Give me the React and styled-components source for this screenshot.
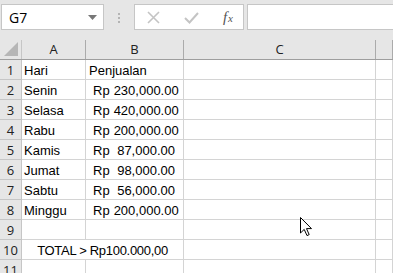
import React from 'react';
import styled, { createGlobalStyle } from 'styled-components';

const GlobalStyle = createGlobalStyle`
  html, body {
    margin: 0;
    padding: 0;
    background: #ffffff;
  }
`;

const rows = [
  ['Hari', { head: 'Penjualan' }],
  ['Senin', { num: '230,000.00' }],
  ['Selasa', { num: '420,000.00' }],
  ['Rabu', { num: '200,000.00' }],
  ['Kamis', { num: '87,000.00' }],
  ['Jumat', { num: '98,000.00' }],
  ['Sabtu', { num: '56,000.00' }],
  ['Minggu', { num: '200,000.00' }],
  ['', null],
];

const cols = [
  { key: 'A', width: 64 },
  { key: 'B', width: 98 },
  { key: 'C', width: 192 },
];

const CellText = ({ value }) => {
  if (!value) return null;
  if (value.head) return <span>{value.head}</span>;
  return (
    <Accounting>
      <span>Rp</span>
      <Amount>{value.num}</Amount>
    </Accounting>
  );
};

const App = () => {
  return (
    <Sheet>
      <GlobalStyle />
      <FormulaBar>
        <NameBox>
          <span>G7</span>
          <svg width="9" height="5" viewBox="0 0 9 5">
            <path d="M0 0 L9 0 L4.5 5 Z" fill="#777" />
          </svg>
        </NameBox>
        <Grip>
          <i />
          <i />
          <i />
        </Grip>
        <ButtonsBox>
          <svg width="13" height="13" viewBox="0 0 13 13">
            <path d="M1 1 L12 12 M12 1 L1 12" stroke="#c4c4c4" strokeWidth="1.6" fill="none" />
          </svg>
          <svg width="15" height="13" viewBox="0 0 15 13">
            <path d="M1 7 L5.5 11.5 L14 2" stroke="#c4c4c4" strokeWidth="2" fill="none" />
          </svg>
          <Fx>
            f<sub>x</sub>
          </Fx>
        </ButtonsBox>
        <FormulaInput />
      </FormulaBar>

      <Grid>
        <HeaderRow>
          <Corner>
            <svg width="14" height="14" viewBox="0 0 14 14">
              <path d="M14 0 L14 14 L0 14 Z" fill="#b6b6b6" />
            </svg>
          </Corner>
          {cols.map((c) => (
            <ColHead key={c.key} $width={c.width}>
              {c.key}
            </ColHead>
          ))}
          <ColHead $fill />
        </HeaderRow>

        {rows.map(([day, val], i) => (
          <Row key={i}>
            <RowHead>{i + 1}</RowHead>
            <Cell $width={64}>{day}</Cell>
            <Cell $width={98} $left={val && val.head ? 3 : 7} $right={8}>
              <CellText value={val} />
            </Cell>
            <Cell $width={192} />
            <Cell $fill />
          </Row>
        ))}

        <Row>
          <RowHead>10</RowHead>
          <Merged $width={162}>TOTAL &gt; Rp100.000,00</Merged>
          <Cell $width={192} />
          <Cell $fill />
        </Row>
        <Row>
          <RowHead>11</RowHead>
          <Cell $width={64} />
          <Cell $width={98} />
          <Cell $width={192} />
          <Cell $fill />
        </Row>
      </Grid>

      <Pointer width="13" height="20" viewBox="0 0 13 20">
        <path
          d="M0.5 0.5 L0.5 16 L4.2 12.4 L7 18.6 L9.2 17.6 L6.5 11.6 L11.5 11.6 Z"
          fill="#ffffff"
          stroke="#000000"
          strokeWidth="1"
          strokeLinejoin="miter"
        />
      </Pointer>
    </Sheet>
  );
};

const Sheet = styled.div`
  position: relative;
  width: 393px;
  height: 273px;
  overflow: hidden;
  background: #ffffff;
  font-family: 'Liberation Sans', Arial, sans-serif;
  color: #000000;
`;

const FormulaBar = styled.div`
  display: flex;
  align-items: flex-start;
  height: 40px;
  padding: 4px 0 0 1px;
  box-sizing: border-box;
  background: #e6e6e6;
`;

const NameBox = styled.div`
  display: flex;
  align-items: center;
  justify-content: space-between;
  width: 103px;
  height: 26px;
  padding: 0 6px 0 7px;
  box-sizing: border-box;
  background: #ffffff;
  border: 1px solid #c6c6c6;
  font-family: 'Open Sans', sans-serif;
  font-size: 14px;
`;

const Grip = styled.div`
  display: flex;
  flex-direction: column;
  gap: 2px;
  width: 30px;
  align-items: center;
  padding-top: 9px;
  i {
    width: 2px;
    height: 2px;
    background: #b4b4b4;
  }
`;

const ButtonsBox = styled.div`
  display: flex;
  align-items: center;
  justify-content: space-between;
  width: 110px;
  height: 26px;
  padding: 0 10px 0 12px;
  box-sizing: border-box;
  background: #ffffff;
  border: 1px solid #c6c6c6;
`;

const Fx = styled.span`
  font-family: 'Liberation Serif', serif;
  font-style: italic;
  font-size: 15px;
  color: #555555;
  sub {
    font-size: 11px;
    vertical-align: 0;
    margin-left: 1px;
  }
`;

const FormulaInput = styled.div`
  flex: 1;
  height: 26px;
  margin-left: 3px;
  box-sizing: border-box;
  background: #ffffff;
  border: 1px solid #c6c6c6;
  border-right: 0;
`;

const Grid = styled.div`
  display: flex;
  flex-direction: column;
`;

const HeaderRow = styled.div`
  display: flex;
  height: 20px;
  background: #e6e6e6;
  border-bottom: 1px solid #9e9e9e;
  box-sizing: border-box;
`;

const Corner = styled.div`
  flex: none;
  display: flex;
  align-items: flex-end;
  justify-content: flex-end;
  width: 22px;
  padding: 0 3px 3px 0;
  box-sizing: border-box;
  border-right: 1px solid #c6c6c6;
`;

const ColHead = styled.div`
  flex: ${(p) => (p.$fill ? '1' : 'none')};
  width: ${(p) => (p.$fill ? 'auto' : `${p.$width}px`)};
  box-sizing: border-box;
  border-right: 1px solid #ababab;
  text-align: center;
  font-family: 'Open Sans', sans-serif;
  font-size: 13px;
  line-height: 19px;
  color: #222222;
`;

const Row = styled.div`
  display: flex;
  height: 20px;
`;

const RowHead = styled.div`
  flex: none;
  width: 22px;
  box-sizing: border-box;
  background: #e6e6e6;
  border-right: 1px solid #c6c6c6;
  border-bottom: 1px solid #c6c6c6;
  text-align: center;
  font-family: 'Open Sans', sans-serif;
  font-size: 13px;
  line-height: 20px;
  color: #222222;
`;

const Cell = styled.div`
  flex: ${(p) => (p.$fill ? '1' : 'none')};
  width: ${(p) => (p.$fill ? 'auto' : `${p.$width}px`)};
  box-sizing: border-box;
  padding: 2px ${(p) => p.$right ?? 2}px 0 ${(p) => p.$left ?? 2}px;
  border-right: 1px solid #d4d4d4;
  border-bottom: 1px solid #d4d4d4;
  font-size: 13px;
  line-height: 18px;
  white-space: nowrap;
  overflow: hidden;
`;

const Merged = styled(Cell)`
  text-align: center;
  letter-spacing: -0.3px;
`;

const Accounting = styled.div`
  display: flex;
  justify-content: space-between;
  gap: 4px;
`;

const Amount = styled.span`
  flex: none;
`;

const Pointer = styled.svg`
  position: absolute;
  left: 300px;
  top: 217px;
`;

export default App;
